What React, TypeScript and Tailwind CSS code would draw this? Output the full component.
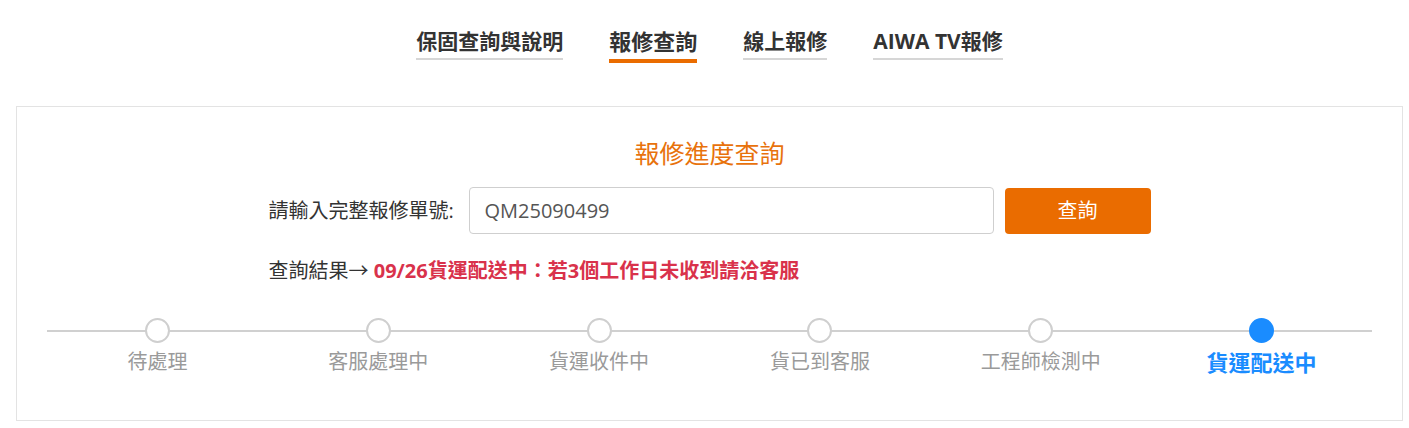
import React from "react";

const tabs = [
  { label: "保固查詢與說明", active: false },
  { label: "報修查詢", active: true },
  { label: "線上報修", active: false },
  { label: "AIWA TV報修", active: false },
];

const steps = ["待處理", "客服處理中", "貨運收件中", "貨已到客服", "工程師檢測中", "貨運配送中"];
const current = 5;

const App = () => {
  return (
    <div
      className="min-h-[428px] bg-white"
      style={{ fontFamily: '"Open Sans", "Noto Sans CJK TC", sans-serif' }}
    >
      <div className="ml-[16px] w-[1387px]">
        <nav className="flex items-start justify-center gap-[46px] pt-[26px]">
          {tabs.map((t) =>
            t.active ? (
              <div
                key={t.label}
                className="border-b-4 border-[#ea6c00] pb-[3px] text-[22px] leading-[30px] font-bold text-[#333]"
              >
                {t.label}
              </div>
            ) : (
              <div
                key={t.label}
                className="border-b-2 border-[#d6d6d6] pb-[2px] text-[21px] leading-[30px] font-bold text-[#333]"
              >
                {t.label}
              </div>
            )
          )}
        </nav>

        <div className="mt-[43px] border border-[#e3e3e3] px-[30px] pt-[28px] pb-[43px]">
          <h2 className="text-center text-[25px] leading-[36px] text-[#e8720c]">報修進度查詢</h2>

          <div className="mx-auto w-[882px]">
            <div className="mt-[16px] flex items-center">
              <label className="w-[200px] text-[20px] leading-[30px] text-[#333]">請輸入完整報修單號:</label>
              <input
                defaultValue="QM25090499"
                className="h-[47px] w-[525px] rounded-[4px] border border-[#cfcfcf] px-[15px] text-[20px] text-[#555] outline-none"
              />
              <button className="ml-[11px] h-[46px] w-[146px] rounded-[4px] bg-[#ea6c00] text-[20px] text-white">
                查詢
              </button>
            </div>

            <p className="mt-[22px] text-[20px] leading-[30px] text-[#333]">
              查詢結果→ <span className="font-bold text-[#d9324b]">09/26貨運配送中：若3個工作日未收到請洽客服</span>
            </p>
          </div>

          <div className="relative mt-[32px]">
            <div className="absolute top-[12px] right-0 left-0 h-[2px] bg-[#d0d0d0]" />
            <div className="relative grid grid-cols-6">
              {steps.map((s, i) => (
                <div key={s} className="flex flex-col items-center">
                  {i === current ? (
                    <div className="h-[25px] w-[25px] rounded-full bg-[#1a8cff]" />
                  ) : (
                    <div className="h-[25px] w-[25px] rounded-full border-2 border-[#cfcfcf] bg-white" />
                  )}
                  {i === current ? (
                    <span className="mt-[4px] text-[22px] leading-[30px] font-bold text-[#1a8cff]">{s}</span>
                  ) : (
                    <span className="mt-[4px] text-[20px] leading-[30px] text-[#9a9a9a]">{s}</span>
                  )}
                </div>
              ))}
            </div>
          </div>
        </div>
      </div>
    </div>
  );
};

export default App;
